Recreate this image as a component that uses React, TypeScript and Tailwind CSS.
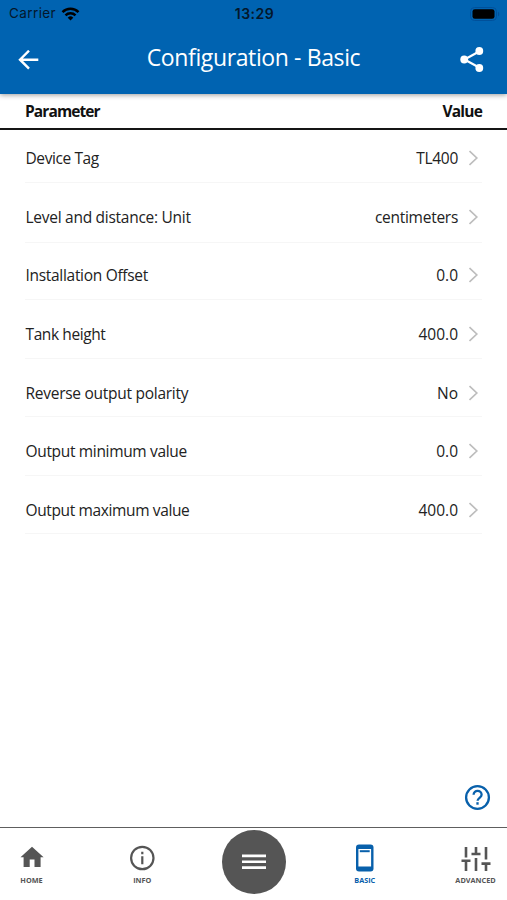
type Row = { label: string; value: string; box: string; track: string; valueTrack: string };

const rows: Row[] = [
  { label: "Device Tag", value: "TL400", box: "h-[53px] pt-[18px]", track: "tracking-[-0.4px]", valueTrack: "tracking-[-0.3px]" },
  { label: "Level and distance: Unit", value: "centimeters", box: "h-[60px] pt-[24px]", track: "tracking-[-0.27px]", valueTrack: "tracking-[-0.27px]" },
  { label: "Installation Offset", value: "0.0", box: "h-[57px] pt-[22px]", track: "tracking-[-0.3px]", valueTrack: "tracking-[0px]" },
  { label: "Tank height", value: "400.0", box: "h-[59px] pt-[24px]", track: "tracking-[-0.4px]", valueTrack: "tracking-[0px]" },
  { label: "Reverse output polarity", value: "No", box: "h-[58px] pt-[24px]", track: "tracking-[-0.27px]", valueTrack: "tracking-[0px]" },
  { label: "Output minimum value", value: "0.0", box: "h-[59px] pt-[24px]", track: "tracking-[-0.33px]", valueTrack: "tracking-[0px]" },
  { label: "Output maximum value", value: "400.0", box: "h-[58px] pt-[24px]", track: "tracking-[-0.37px]", valueTrack: "tracking-[0px]" },
];

function StatusBar() {
  return (
    <div className="grid h-[27px] grid-cols-3 items-center pl-[9px] pr-[7px] font-['Inter','Liberation_Sans',sans-serif] text-[#04172b]">
      <div className="flex items-center gap-[5px]">
        <span className="text-[13.5px] leading-[27px] tracking-[0.4px]">Carrier</span>
        <svg width="19" height="14" viewBox="0 0 18 14" fill="none" stroke="#000" strokeWidth="2.5">
          <path d="M1 5.1a11.4 11.4 0 0 1 16 0" />
          <path d="M4 8.3a7.1 7.1 0 0 1 10 0" />
          <path d="M9 13.6 6.2 10.7a4 4 0 0 1 5.6 0Z" fill="#000" stroke="none" />
        </svg>
      </div>
      <span className="text-center text-[14px] font-semibold leading-[27px] tracking-[0.5px]">13:29</span>
      <svg className="justify-self-end" width="30" height="14" viewBox="0 0 30 14">
        <rect x="0.5" y="0.5" width="26" height="13" rx="4" fill="none" stroke="#00509a" />
        <rect x="2.5" y="2.2" width="22" height="9.6" rx="2.4" fill="#000" />
        <path d="M28 4.7v4.6c1.7-.7 1.7-3.9 0-4.6Z" fill="#00509a" />
      </svg>
    </div>
  );
}

function Header() {
  return (
    <header className="relative z-10 h-[94px] bg-[#0063b1] shadow-[0_1px_5px_rgba(0,0,0,0.4)]">
      <StatusBar />
      <div className="flex h-[65px] items-center justify-between pl-[18px] pr-[23px]">
        <svg width="21" height="20" viewBox="0 0 21 20" fill="none" stroke="#fff" strokeWidth="2.4">
          <path d="M20.3 9.7H2M11 .7 2 9.7l9 9" />
        </svg>
        <h1 className="pb-[5px] pl-[8px] text-[23px] leading-[30px] tracking-[-0.38px] text-white">Configuration - Basic</h1>
        <svg width="24" height="26" viewBox="0 0 24 26" fill="#fff">
          <path d="M20 4 4.5 12.5 20 21" fill="none" stroke="#fff" strokeWidth="2.2" />
          <circle cx="19.3" cy="4" r="3.9" />
          <circle cx="4.2" cy="12.5" r="3.9" />
          <circle cx="19.3" cy="21" r="3.9" />
        </svg>
      </div>
    </header>
  );
}

function Chevron() {
  return (
    <svg width="10" height="16" viewBox="0 0 10 16" fill="none" stroke="#bdbdbd" strokeWidth="1.7">
      <path d="m.5 1 7.3 7-7.3 7" />
    </svg>
  );
}

function TabLabel({ children, className }: { children: string; className: string }) {
  return <span className={`text-[7.3px] font-bold leading-[9px] ${className}`}>{children}</span>;
}

export default function App() {
  return (
    <div className="flex h-[900px] w-[507px] flex-col overflow-hidden bg-white font-['Open_Sans','Noto_Sans',sans-serif] text-[#222]">
      <Header />
      <div className="flex h-[36px] items-center justify-between border-b-2 border-[#151515] px-[25px] text-[15.5px] font-bold leading-[20px] text-[#111]">
        <span className="tracking-[-0.9px]">Parameter</span>
        <span className="tracking-[-0.8px]">Value</span>
      </div>
      <main className="flex flex-1 flex-col">
        {rows.map((row) => (
          <div key={row.label} className={`mx-[25px] flex items-start justify-between border-b border-[#f6f6f6] pl-[0.5px] text-[15.5px] leading-[20px] ${row.box}`}>
            <span className={row.track}>{row.label}</span>
            <span className="flex items-center gap-[11px] pr-[3px]">
              <span className={row.valueTrack}>{row.value}</span>
              <Chevron />
            </span>
          </div>
        ))}
        <button className="mb-[16px] mr-[16px] mt-auto self-end" aria-label="Help">
          <svg width="27" height="27" viewBox="0 0 27 27" fill="none" stroke="#0860ab" strokeWidth="2.3">
            <circle cx="13.5" cy="13.5" r="11.4" />
            <path d="M9.6 10.8c0-5.2 8-5 8 0 0 2.9-4 3.1-4 6" />
            <path d="M13.5 18.2v2.5" />
          </svg>
        </button>
      </main>
      <nav className="flex h-[73px] justify-between border-t-[1px] border-[#5e5e5e] text-[#555]">
        <div className="flex w-[63px] flex-col items-center pt-[18px]">
          <svg width="24" height="24" viewBox="0 0 24 24" fill="#555">
            <path d="M12 .7.5 11.2h3.1V21H9.7v-7.5h4.8V21h6.1v-9.8h3Z" />
          </svg>
          <TabLabel className="mt-[6px]">HOME</TabLabel>
        </div>
        <div className="flex w-[81px] flex-col items-center pt-[17px]">
          <svg width="26" height="26" viewBox="0 0 26 26" fill="none" stroke="#555" strokeWidth="2.2">
            <circle cx="13.3" cy="13" r="11.2" />
            <path d="M13.3 6.7v2.5M13.3 11.2v8" />
          </svg>
          <TabLabel className="mt-[5px]">INFO</TabLabel>
        </div>
        <button className="mt-[2px] grid size-[64px] place-items-center rounded-full bg-[#555]" aria-label="Menu">
          <svg width="24" height="16" viewBox="0 0 24 16" fill="#fff">
            <path d="M0 .5h24v2.7H0zM0 6.4h24v2.7H0zM0 12.3h24V15H0z" />
          </svg>
        </button>
        <div className="flex w-[81px] flex-col items-center pt-[16px] text-[#0860ab]">
          <svg width="18" height="28" viewBox="0 0 18 28">
            <rect y=".5" width="17.5" height="27" rx="3" fill="#0860ab" />
            <path d="M2.4 5h12.7v17.5H2.4z" fill="#fff" />
            <path d="M3.8 6.2h9.9v2H3.8z" fill="#0860ab" />
          </svg>
          <TabLabel className="mt-[4px]">BASIC</TabLabel>
        </div>
        <div className="flex w-[63px] flex-col items-center pt-[18px]">
          <svg width="30" height="26" viewBox="0 0 30 26" fill="none" stroke="#555" strokeWidth="2.6">
            <path d="M5 1v10.5M15 1v7.5M25 1v12.5M10.5 8h9M.5 14.7h9M5 14v11M15 12v13M20.5 17.6h9M25 17v8" />
          </svg>
          <TabLabel className="mt-[4px]">ADVANCED</TabLabel>
        </div>
      </nav>
    </div>
  );
}
